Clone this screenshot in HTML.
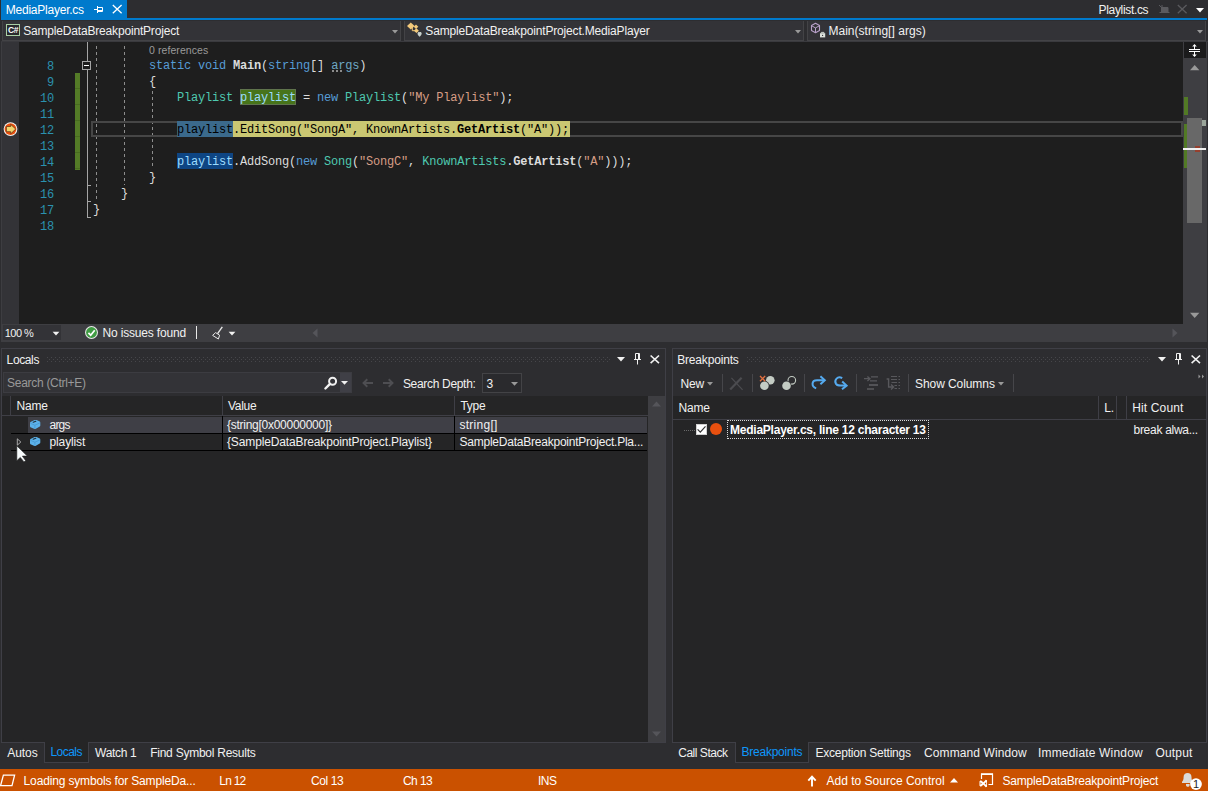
<!DOCTYPE html>
<html>
<head>
<meta charset="utf-8">
<title>MediaPlayer.cs</title>
<style>
*{box-sizing:border-box;margin:0;padding:0}
html,body{width:1208px;height:791px;overflow:hidden;background:#2d2d30}
body{position:relative;font-family:"Liberation Sans",sans-serif;font-size:12px;color:#f1f1f1;line-height:1}
.a{position:absolute}
.t{position:absolute;white-space:pre;line-height:16px;height:16px;font-family:"Liberation Sans",sans-serif;font-size:12px;color:#f1f1f1}
.code{font-family:"Liberation Mono",monospace;font-size:12px;letter-spacing:-0.2px;color:#dcdcdc}
.kw{color:#569cd6}.ty{color:#4ec9b0}.st{color:#d69d85}.lv{color:#9cdcfe}.b{font-weight:bold}
.ln{position:absolute;left:20px;width:34px;text-align:right;font-family:"Liberation Mono",monospace;font-size:12px;letter-spacing:-0.2px;color:#2b91af;line-height:16px;height:16px}
.guide{width:1px;background:repeating-linear-gradient(to bottom,#8e8e8e 0,#8e8e8e 3px,transparent 3px,transparent 6px)}
.grip{height:5px;background-image:radial-gradient(circle at 0.5px 0.5px,#46464a 0.6px,transparent 0.7px),radial-gradient(circle at 2.5px 2.5px,#46464a 0.6px,transparent 0.7px);background-size:4px 4px}
.sep{width:1px;background:#46464a}
svg{position:absolute;overflow:visible}
</style>
</head>
<body>

<!-- ===== document tab strip ===== -->
<div class="a" style="left:0;top:0;width:1208px;height:18px;background:#2d2d30"></div>
<div class="a" style="left:1px;top:0;width:126px;height:18px;background:#007acc"></div>
<div class="t" style="left:5.80px;top:2px;letter-spacing:-0.236px;color:#fff">MediaPlayer.cs</div>
<div class="t" style="left:1098.60px;top:2px;letter-spacing:-0.334px;">Playlist.cs</div>
<svg style="left:93px;top:5px" width="10" height="9" viewBox="0 0 10 9"><path d="M1 4.500h3.500M4.500 1v7M4.500 2.500h5v3.500M4.500 5.500h5v1h-5" stroke="#fff" stroke-width="1" fill="none"/></svg>
<svg style="left:112px;top:4px" width="11" height="10" viewBox="0 0 11 10"><path d="M0.800 1l8.800 8.200M9.600 1L0.800 9.200" stroke="#fff" stroke-width="1.300" fill="none"/></svg>
<svg style="left:1158px;top:4px" width="12" height="10" viewBox="0 0 12 10"><path d="M3.500 3.500h6.500v4.500h-6.500zM1.500 8.500h10" fill="#5a5a5e" stroke="#5a5a5e" stroke-width="1"/><path d="M1 1l3 3M4 1v2" stroke="#5a5a5e" stroke-width="1" fill="none"/></svg>
<svg style="left:1177px;top:4px" width="11" height="10" viewBox="0 0 11 10"><path d="M0.800 1l8.800 8.200M9.600 1L0.800 9.200" stroke="#5a5a5e" stroke-width="1.300" fill="none"/></svg>
<svg style="left:1196px;top:8px" width="8" height="5" viewBox="0 0 8 5"><path d="M0 0h8L4 4.400z" fill="#fff"/></svg>
<div class="a" style="left:1px;top:18px;width:1206px;height:2px;background:#007acc"></div>

<!-- ===== navigation bar ===== -->
<div class="a" style="left:0;top:20px;width:1208px;height:22px;background:#2d2d30"></div>
<div class="a" style="left:0;top:41px;width:1208px;height:1px;background:#3a3a3e"></div>
<div class="a" style="left:2px;top:21px;width:399px;height:20px;background:#333337;border:1px solid #434346;border-top:none"></div>
<div class="a" style="left:404px;top:21px;width:400px;height:20px;background:#333337;border:1px solid #434346;border-top:none"></div>
<div class="a" style="left:807px;top:21px;width:399px;height:20px;background:#333337;border:1px solid #434346;border-top:none"></div>
<svg style="left:392px;top:30px" width="6" height="4" viewBox="0 0 6 4"><path d="M0 0h6L3 3.4z" fill="#999"/></svg>
<svg style="left:795px;top:30px" width="6" height="4" viewBox="0 0 6 4"><path d="M0 0h6L3 3.4z" fill="#999"/></svg>
<svg style="left:1197px;top:30px" width="6" height="4" viewBox="0 0 6 4"><path d="M0 0h6L3 3.4z" fill="#999"/></svg>
<!-- C# project icon -->
<div class="a" style="left:6px;top:24px;width:14px;height:12px;border:1px solid #a9cfa4;background:#2a2a2d"></div>
<div class="t" style="left:7px;top:25px;width:12px;height:10px;line-height:10px;font-size:8.5px;font-weight:bold;letter-spacing:-0.5px;color:#fff;text-align:center">C#</div>
<!-- class icon -->
<svg style="left:406px;top:22px" width="18" height="17" viewBox="0 0 18 17">
<path d="M4.8 0.4L8.6 4 4.8 7.6 1 4z" fill="#f3c97a"/>
<path d="M10 2.5l2.3 2.3L10 7.100 7.700 4.800z" fill="#f3c97a"/>
<path d="M10.400 6.300l2.500 2.400-2.500 2.400-2.500-2.400z" fill="#f3c97a"/>
<path d="M6.300 5v3.700h2.500" stroke="#f3c97a" stroke-width="1" fill="none"/>
<path d="M13.600 10.200c0.800-0.700 2.100 0 2.100 1.200 0 1.500-2.100 3.300-2.100 3.300s-2.100-1.800-2.100-3.300c0-1.200 1.300-1.900 2.100-1.200z" fill="#c8d0cc"/>
</svg>
<!-- method icon -->
<svg style="left:810px;top:22px" width="17" height="17" viewBox="0 0 17 17">
<path d="M5.500 1.300l4 2.300v4.800l-4 2.300-4-2.300V3.600z" stroke="#b8a0c8" stroke-width="1.100" fill="none" stroke-linejoin="round"/>
<path d="M1.700 3.800l3.800 2.100 3.800-2.100M5.500 5.900v4.600" stroke="#b8a0c8" stroke-width="1" fill="none"/>
<rect x="10" y="11.200" width="5.200" height="4.200" fill="#dde3dd"/>
<path d="M11.300 11.200v-0.800h2.600v0.800" stroke="#dde3dd" stroke-width="0.900" fill="none"/>
<circle cx="12.600" cy="13.400" r="0.600" fill="#333337"/>
</svg>
<div class="t" style="left:23.20px;top:23px;letter-spacing:-0.178px;">SampleDataBreakpointProject</div>
<div class="t" style="left:425.30px;top:23px;letter-spacing:-0.165px;">SampleDataBreakpointProject.MediaPlayer</div>
<div class="t" style="left:828.40px;top:23px;letter-spacing:0.034px;">Main(string[] args)</div>

<!-- ===== editor ===== -->
<div class="a" style="left:0;top:42px;width:1186px;height:282px;background:#1e1e1e"></div>
<div class="a" style="left:0;top:42px;width:19px;height:282px;background:#333337"></div>
<div class="a" style="left:1px;top:42px;width:1px;height:282px;background:#3d3d41"></div>
<!-- change tracking bar -->
<div class="a" style="left:74.5px;top:73px;width:5px;height:96.5px;background:repeating-linear-gradient(to bottom,#547b27 0,#547b27 15px,#486b20 15px,#486b20 16px)"></div>
<!-- outlining -->
<div class="a" style="left:87px;top:42px;width:1px;height:176px;background:#a5a5a5"></div>
<div class="a" style="left:87px;top:185px;width:4px;height:1px;background:#a5a5a5"></div>
<div class="a" style="left:87px;top:201px;width:4px;height:1px;background:#a5a5a5"></div>
<div class="a" style="left:87px;top:217px;width:4px;height:1px;background:#a5a5a5"></div>
<div class="a" style="left:82px;top:61px;width:9px;height:9px;background:#1e1e1e;border:1px solid #a5a5a5"></div>
<div class="a" style="left:84px;top:65px;width:5px;height:1px;background:#fff"></div>
<!-- indent guides -->
<div class="a guide" style="left:96px;top:46px;height:154px"></div>
<div class="a guide" style="left:124px;top:46px;height:139px"></div>
<div class="a guide" style="left:152px;top:91px;height:78px"></div>
<!-- current line box -->
<div class="a" style="left:91px;top:121px;width:1092px;height:16px;border:2px solid #464646"></div>
<!-- highlights -->
<div class="a" style="left:240px;top:89px;width:56px;height:16px;background:#47741a;border:1px solid #5f734c"></div>
<div class="a" style="left:177px;top:121px;width:393px;height:16px;background:#cac772"></div>
<div class="a" style="left:177px;top:121px;width:56px;height:16px;background:#3b6a8c"></div>
<div class="a" style="left:177px;top:153px;width:56px;height:16px;background:#0e4583"></div>
<!-- line numbers -->
<div class="ln" style="top:59px">8</div>
<div class="ln" style="top:75px">9</div>
<div class="ln" style="top:91px">10</div>
<div class="ln" style="top:107px">11</div>
<div class="ln" style="top:123px">12</div>
<div class="ln" style="top:139px">13</div>
<div class="ln" style="top:155px">14</div>
<div class="ln" style="top:171px">15</div>
<div class="ln" style="top:187px">16</div>
<div class="ln" style="top:203px">17</div>
<div class="ln" style="top:219px">18</div>
<!-- fade dots -->
<div class="a" style="left:332px;top:70px;width:10px;height:2px;background:repeating-linear-gradient(to right,#8c8c8c 0,#8c8c8c 2px,transparent 2px,transparent 4px)"></div>
<!-- code -->
<div class="t" style="left:149.00px;top:42px;letter-spacing:0.080px;font-size:10.5px;color:#9a9a9a">0 references</div>
<div class="t code" style="left:149px;top:58px"><span class="kw">static</span> <span class="kw">void</span> <span class="b">Main</span>(<span class="kw">string</span>[] <span style="color:#6fa8c4">args</span>)</div>
<div class="t code" style="left:149px;top:74px">{</div>
<div class="t code" style="left:177px;top:90px"><span class="ty">Playlist</span> <span class="lv">playlist</span> = <span class="kw">new</span> <span class="ty">Playlist</span>(<span class="st">"My Playlist"</span>);</div>
<div class="t code" style="left:177px;top:122px;color:#000">playlist.EditSong("SongA", KnownArtists.<span class="b">GetArtist</span>("A"));</div>
<div class="t code" style="left:177px;top:154px"><span class="lv">playlist</span>.AddSong(<span class="kw">new</span> <span class="ty">Song</span>(<span class="st">"SongC"</span>, <span class="ty">KnownArtists</span>.<span class="b">GetArtist</span>(<span class="st">"A"</span>)));</div>
<div class="t code" style="left:149px;top:170px">}</div>
<div class="t code" style="left:121px;top:186px">}</div>
<div class="t code" style="left:93px;top:202px">}</div>

<!-- breakpoint / current statement glyph -->
<svg style="left:3px;top:121px" width="16" height="16" viewBox="0 0 16 16">
<circle cx="7.500" cy="8.100" r="6.900" fill="#f4f4f0"/>
<circle cx="7.500" cy="8.100" r="5.900" fill="#ea4f0c"/>
<path d="M3.400 5.500h4.300V3.400l5 4.700-5 4.700v-2.100H3.400z" fill="#f0d56e" stroke="#5a2c14" stroke-width="0.700" stroke-linejoin="round"/>
</svg>
<!-- vertical scrollbar -->
<div class="a" style="left:1183px;top:42px;width:24px;height:282px;background:#3e3e42"></div>
<div class="a" style="left:1184px;top:42px;width:22px;height:16px;background:#1b1b1c"></div>
<svg style="left:1184px;top:42px" width="22" height="16" viewBox="0 0 22 16">
<path d="M5 7.5h11M5 9.5h11" stroke="#fff" stroke-width="1" fill="none"/>
<path d="M10.5 3v4M10.5 10v4" stroke="#fff" stroke-width="1" fill="none"/>
<path d="M8.2 4.6l2.3-2.6 2.3 2.6zM8.2 12.4l2.3 2.6 2.3-2.6z" fill="#fff"/>
</svg>
<svg style="left:1183px;top:58px" width="23" height="266" viewBox="0 0 23 266">
<path d="M7 12.3l4.7-5.3 4.7 5.3z" fill="#999"/>
<path d="M7 254.7l4.7 5.3 4.7-5.3z" fill="#999"/>
</svg>
<div class="a" style="left:1184px;top:97px;width:4px;height:18px;background:#527a25"></div>
<div class="a" style="left:1184px;top:124px;width:4px;height:44px;background:#527a25"></div>
<div class="a" style="left:1187px;top:118px;width:15px;height:105px;background:#686868"></div>
<div class="a" style="left:1202px;top:120px;width:4px;height:6px;background:#9aa59a"></div>
<div class="a" style="left:1195px;top:146px;width:5px;height:6px;background:#96402e"></div>
<div class="a" style="left:1183px;top:148px;width:23px;height:2px;background:#f0f0f0"></div>


<!-- ===== editor bottom bar ===== -->
<div class="a" style="left:0;top:324px;width:1207px;height:18px;background:#3e3e42"></div>
<div class="a" style="left:3px;top:325px;width:58px;height:15px;background:#333337"></div>
<div class="t" style="left:4.70px;top:325px;letter-spacing:-0.502px;font-size:11px">100 %</div>
<svg style="left:52px;top:331px" width="8" height="5" viewBox="0 0 8 5"><path d="M0.600 0.800h6.800L4 4.400z" fill="#f1f1f1"/></svg>
<svg style="left:84px;top:325px" width="16" height="16" viewBox="0 0 16 16">
<circle cx="7.5" cy="7.5" r="6.5" fill="#e8e8e8"/>
<circle cx="7.5" cy="7.5" r="5.4" fill="#3f9b42"/>
<path d="M4.4 7.8l2.3 2.4 4-5" stroke="#fff" stroke-width="1.7" fill="none"/>
</svg>
<div class="t" style="left:102.50px;top:325px;letter-spacing:-0.170px;">No issues found</div>
<div class="a" style="left:196px;top:326px;width:1px;height:13px;background:#e8e8e8"></div>
<svg style="left:211px;top:326px" width="14" height="14" viewBox="0 0 14 14">
<path d="M11.3 0.8L6.6 7.6" stroke="#e8e8e8" stroke-width="1.4" fill="none"/>
<path d="M4.6 6.6l4 2.6-1.2 3.8-5.8-3.6z" fill="none" stroke="#e8e8e8" stroke-width="1"/>
</svg>
<svg style="left:228px;top:331px" width="8" height="5" viewBox="0 0 8 5"><path d="M0.600 0.800h6.800L4 4.400z" fill="#f1f1f1"/></svg>
<svg style="left:312px;top:328px" width="6" height="10" viewBox="0 0 6 10"><path d="M5.5 0.5v9L0.5 5z" fill="#55555a"/></svg>
<svg style="left:1172px;top:328px" width="6" height="10" viewBox="0 0 6 10"><path d="M0.5 0.5v9L5.5 5z" fill="#55555a"/></svg>


<div class="a" style="left:0;top:20px;width:1px;height:322px;background:#2d2d30"></div>
<!-- ===== Locals tool window ===== -->
<div class="a" style="left:1px;top:348px;width:665px;height:395px;border:1px solid #3f3f46;background:#2d2d30"></div>
<div class="t" style="left:6.60px;top:352px;letter-spacing:-0.378px;">Locals</div>
<div class="a grip" style="left:47px;top:357px;width:563px"></div>
<svg style="left:617px;top:357px" width="8" height="5" viewBox="0 0 8 5"><path d="M0 0h8L4 4.6z" fill="#f1f1f1"/></svg>
<svg style="left:633px;top:353px" width="9" height="12" viewBox="0 0 9 12"><path d="M2.500 0.500h4v6h-4zM5.500 0.500v6M1 6.500h7M4.500 6.500v5" stroke="#f1f1f1" stroke-width="1" fill="none"/></svg>
<svg style="left:649.5px;top:355px" width="10" height="9" viewBox="0 0 10 9"><path d="M0.600 0.500L9 8.200M9 0.500L0.600 8.200" stroke="#f1f1f1" stroke-width="1.600" fill="none"/></svg>
<!-- search row -->
<div class="a" style="left:3px;top:372px;width:349px;height:21px;background:#333337;border:1px solid #3c3c41"></div>
<div class="a" style="left:340px;top:373px;width:11px;height:19px;background:#3f3f46"></div>
<div class="t" style="left:7.10px;top:375px;letter-spacing:-0.295px;color:#999">Search (Ctrl+E)</div>
<svg style="left:324px;top:376px" width="14" height="14" viewBox="0 0 14 14"><circle cx="8.600" cy="5.200" r="3.500" stroke="#f1f1f1" stroke-width="2" fill="none"/><path d="M6 7.900L1.400 12.500" stroke="#f1f1f1" stroke-width="2.400" stroke-linecap="round" fill="none"/></svg>
<svg style="left:341px;top:381px" width="7" height="4" viewBox="0 0 7 4"><path d="M0 0h7L3.5 3.8z" fill="#f1f1f1"/></svg>
<svg style="left:362px;top:378px" width="12" height="10" viewBox="0 0 12 10"><path d="M11 5H2M5.300 1.300L1.500 5l3.800 3.700" stroke="#4e4e52" stroke-width="1.900" fill="none"/></svg>
<svg style="left:382px;top:378px" width="12" height="10" viewBox="0 0 12 10"><path d="M1 5h9M6.700 1.300L10.500 5 6.700 8.700" stroke="#4e4e52" stroke-width="1.900" fill="none"/></svg>
<div class="t" style="left:402.90px;top:376px;letter-spacing:-0.315px;">Search Depth:</div>
<div class="a" style="left:482px;top:373px;width:40px;height:20px;background:#2a2a2d;border:1px solid #434346"></div>
<div class="t" style="left:486.50px;top:376px;letter-spacing:-1.100px;">3</div>
<svg style="left:511px;top:382px" width="7" height="4" viewBox="0 0 7 4"><path d="M0 0h7L3.5 3.8z" fill="#999"/></svg>
<!-- table -->
<div class="a" style="left:2px;top:396px;width:646px;height:346px;background:#252526"></div>
<div class="a" style="left:648px;top:396px;width:17px;height:346px;background:#3e3e42"></div>
<svg style="left:648px;top:396px" width="17" height="346" viewBox="0 0 17 346"><path d="M4 10.6L8.5 5.6l4.5 5z" fill="#55555a"/><path d="M4 335.4l4.5 5 4.5-5z" fill="#55555a"/></svg>
<!-- header separators -->
<div class="a" style="left:10px;top:396px;width:1px;height:19px;background:#3f3f46"></div>
<div class="a" style="left:222px;top:396px;width:1px;height:19px;background:#3f3f46"></div>
<div class="a" style="left:454px;top:396px;width:1px;height:19px;background:#3f3f46"></div>
<div class="a" style="left:2px;top:415px;width:646px;height:1px;background:#3f3f46"></div>
<div class="t" style="left:16.50px;top:398px;letter-spacing:-0.212px;">Name</div>
<div class="t" style="left:228.00px;top:398px;letter-spacing:-0.282px;">Value</div>
<div class="t" style="left:460.40px;top:398px;letter-spacing:-0.247px;">Type</div>
<!-- rows -->
<div class="a" style="left:28px;top:417px;width:619px;height:16px;background:#3f3f46"></div>
<div class="a" style="left:11px;top:433px;width:636px;height:1px;background:#000"></div>
<div class="a" style="left:11px;top:450px;width:636px;height:1px;background:#000"></div>
<div class="a" style="left:222px;top:416px;width:1px;height:35px;background:#000"></div>
<div class="a" style="left:454px;top:416px;width:1px;height:35px;background:#000"></div>
<svg style="left:29px;top:419px" width="12" height="11" viewBox="0 0 12 11"><path d="M1 4.200C1 3.400 1.300 3 2 2.700L5.600 1.100c0.700-0.300 1.200-0.300 1.900 0l2.800 1.100c0.700 0.300 1 0.700 1 1.400v2.600c0 0.800-0.300 1.200-1 1.500L6.900 9.700c-0.700 0.300-1.200 0.300-1.900 0L2 8.400C1.300 8.100 1 7.700 1 6.900z" fill="#5cb2ea"/><path d="M4.200 3.300l2.600-1.100" stroke="#20303c" stroke-width="1.100" stroke-linecap="round" fill="none"/><path d="M1.400 4.300l4.500 1.900 5-2.300M5.900 6.200v3.400" stroke="#3f8fc8" stroke-width="0.600" fill="none"/></svg>
<svg style="left:29px;top:436px" width="12" height="11" viewBox="0 0 12 11"><path d="M1 4.200C1 3.400 1.300 3 2 2.700L5.600 1.100c0.700-0.300 1.200-0.300 1.900 0l2.800 1.100c0.700 0.300 1 0.700 1 1.400v2.600c0 0.800-0.300 1.200-1 1.500L6.900 9.700c-0.700 0.300-1.200 0.300-1.900 0L2 8.400C1.300 8.100 1 7.700 1 6.900z" fill="#5cb2ea"/><path d="M4.200 3.300l2.600-1.100" stroke="#20303c" stroke-width="1.100" stroke-linecap="round" fill="none"/><path d="M1.400 4.300l4.500 1.900 5-2.300M5.900 6.200v3.400" stroke="#3f8fc8" stroke-width="0.600" fill="none"/></svg>
<svg style="left:16px;top:438px" width="6" height="8" viewBox="0 0 6 8"><path d="M1.300 0.800v6.400L4.800 4z" stroke="#b8b8b8" stroke-width="0.900" fill="none"/></svg>
<div class="t" style="left:49.50px;top:417px;letter-spacing:-0.781px;">args</div>
<div class="t" style="left:49.50px;top:434px;letter-spacing:-0.121px;">playlist</div>
<div class="t" style="left:227.00px;top:417px;letter-spacing:-0.268px;">{string[0x00000000]}</div>
<div class="t" style="left:227.00px;top:434px;letter-spacing:-0.138px;">{SampleDataBreakpointProject.Playlist}</div>
<div class="t" style="left:459.50px;top:417px;letter-spacing:0.260px;">string[]</div>
<div class="t" style="left:459.50px;top:434px;letter-spacing:-0.230px;">SampleDataBreakpointProject.Pla...</div>
<!-- mouse cursor -->
<svg style="left:16px;top:444px" width="13" height="20" viewBox="0 0 13 20"><path d="M0.800 1.800V16.700L4.300 13.400 8 17.900 9.700 16.700 6.400 12.100H11.300z" fill="#f6fafb" stroke="#1a1a1a" stroke-width="0.600" stroke-linejoin="round"/></svg>
<!-- bottom tabs -->
<div class="a" style="left:44px;top:742px;width:45px;height:21px;background:#252526;border:1px solid #3f3f46;border-top:none"></div>
<div class="t" style="left:7.20px;top:745px;letter-spacing:-0.046px;">Autos</div>
<div class="t" style="left:50.40px;top:744px;letter-spacing:-0.537px;color:#0e97fb">Locals</div>
<div class="t" style="left:95.10px;top:745px;letter-spacing:-0.333px;">Watch 1</div>
<div class="t" style="left:150.20px;top:745px;letter-spacing:-0.247px;">Find Symbol Results</div>


<!-- ===== Breakpoints tool window ===== -->
<div class="a" style="left:672px;top:348px;width:535px;height:395px;border:1px solid #3f3f46;background:#2d2d30"></div>
<div class="t" style="left:677.20px;top:352px;letter-spacing:-0.177px;">Breakpoints</div>
<div class="a grip" style="left:747px;top:357px;width:403px"></div>
<svg style="left:1158px;top:357px" width="8" height="5" viewBox="0 0 8 5"><path d="M0 0h8L4 4.6z" fill="#f1f1f1"/></svg>
<svg style="left:1174px;top:353px" width="9" height="12" viewBox="0 0 9 12"><path d="M2.500 0.500h4v6h-4zM5.500 0.500v6M1 6.500h7M4.500 6.500v5" stroke="#f1f1f1" stroke-width="1" fill="none"/></svg>
<svg style="left:1190.5px;top:355px" width="10" height="9" viewBox="0 0 10 9"><path d="M0.600 0.500L9 8.200M9 0.500L0.600 8.200" stroke="#f1f1f1" stroke-width="1.600" fill="none"/></svg>
<!-- toolbar -->
<div class="t" style="left:680.50px;top:376px;letter-spacing:-0.170px;">New</div>
<svg style="left:707px;top:382px" width="6" height="4" viewBox="0 0 6 4"><path d="M0 0h6L3 3.4z" fill="#999"/></svg>
<div class="a sep" style="left:722px;top:374px;height:18px"></div>
<svg style="left:729px;top:377px" width="15" height="14" viewBox="0 0 15 14"><path d="M1.200 12.600L12.600 0.800" stroke="#4c4c50" stroke-width="2.200" fill="none"/><path d="M2.400 0.800L13.600 12.800" stroke="#4c4c50" stroke-width="1.200" fill="none"/></svg>
<div class="a sep" style="left:752px;top:374px;height:18px"></div>
<svg style="left:759px;top:375px" width="17" height="16" viewBox="0 0 17 16"><circle cx="11.300" cy="5.300" r="4.300" fill="#c4ccc4"/><circle cx="5.400" cy="10.700" r="4.900" fill="#2d2d30"/><circle cx="5.400" cy="10.700" r="4.300" fill="#c4ccc4"/><path d="M1 1l5.200 5.200M6.200 1L1 6.200" stroke="#e2703f" stroke-width="1.300" fill="none"/></svg>
<svg style="left:781px;top:375px" width="17" height="16" viewBox="0 0 17 16"><circle cx="10.800" cy="5.300" r="3.800" fill="none" stroke="#c4ccc4" stroke-width="1.100"/><circle cx="5.500" cy="10.700" r="4.900" fill="#2d2d30"/><circle cx="5.500" cy="10.700" r="4.300" fill="#c4ccc4"/></svg>
<div class="a sep" style="left:804px;top:374px;height:18px"></div>
<svg style="left:811px;top:376px" width="16" height="14" viewBox="0 0 16 14"><path d="M5.200 12.400C0.200 10.600 0.200 4.200 6 4.200H13.400" stroke="#55aaef" stroke-width="2" fill="none"/><path d="M9.400 0.200L13.800 4.200 9.400 8.200" stroke="#55aaef" stroke-width="2" fill="none"/></svg>
<svg style="left:834px;top:376px" width="14" height="14" viewBox="0 0 14 14"><path d="M8.200 2.200C3.600 -0.400 -0.200 4 2 7.800 3.600 10 6.200 9.700 11.400 9.500" stroke="#55aaef" stroke-width="2" fill="none"/><path d="M8.200 5.600L12.600 9.600 8 13.300" stroke="#55aaef" stroke-width="2" fill="none"/></svg>
<div class="a sep" style="left:856px;top:374px;height:18px"></div>
<svg style="left:863px;top:375px" width="16" height="16" viewBox="0 0 16 16"><path d="M1 3.700h6M4.400 1.400L7 3.700 4.400 6" stroke="#58585c" stroke-width="1.300" fill="none"/><path d="M8 1.800h7M7 5.800h7" stroke="#58585c" stroke-width="1.300" fill="none"/><path d="M6 10h9" stroke="#58585c" stroke-width="1.800" fill="none"/><path d="M4 14h7" stroke="#58585c" stroke-width="1.600" fill="none"/></svg>
<svg style="left:886px;top:375px" width="16" height="16" viewBox="0 0 16 16"><path d="M0.600 4h2v8h4.600M5 9.600L7.600 12 5 14.400" stroke="#58585c" stroke-width="1.400" fill="none"/><path d="M5 1.500h6M5 4.500h6M5.500 7.500h5.500M8.500 10.500h2.500M8.500 13.500h2.500M12.500 1.500h1.500M12.500 4.500h1.500M12.500 7.500h1.500M12.500 10.500h1.500M12.500 13.500h1.500" stroke="#58585c" stroke-width="1.100" fill="none"/></svg>
<div class="a sep" style="left:908px;top:374px;height:18px"></div>
<div class="t" style="left:915.00px;top:376px;letter-spacing:-0.073px;">Show Columns</div>
<svg style="left:998px;top:382px" width="6" height="4" viewBox="0 0 6 4"><path d="M0 0h6L3 3.4z" fill="#999"/></svg>
<div class="a sep" style="left:1013px;top:374px;height:18px"></div>
<svg style="left:1198px;top:374px" width="7" height="5" viewBox="0 0 7 5"><path d="M0.5 0.5L2.5 2.5 0.5 4.5zM4 0.5L6 2.5 4 4.5z" fill="#999"/></svg>
<!-- list -->
<div class="a" style="left:673px;top:396px;width:533px;height:346px;background:#252526"></div>
<div class="a" style="left:673px;top:419px;width:533px;height:1px;background:#3f3f46"></div>
<div class="a" style="left:1098px;top:396px;width:1px;height:23px;background:#3f3f46"></div>
<div class="a" style="left:1116px;top:396px;width:1px;height:23px;background:#3f3f46"></div>
<div class="a" style="left:1126px;top:396px;width:1px;height:23px;background:#3f3f46"></div>
<div class="t" style="left:678.50px;top:400px;letter-spacing:-0.179px;">Name</div>
<div class="t" style="left:1104.20px;top:400px;">L.</div>
<div class="t" style="left:1132.20px;top:400px;letter-spacing:0.152px;">Hit Count</div>
<div class="a" style="left:684px;top:430px;width:12px;height:1px;background:repeating-linear-gradient(to right,#6a6a6a 0,#6a6a6a 1px,transparent 1px,transparent 2px)"></div>
<div class="a" style="left:696px;top:424px;width:11px;height:11px;background:#fff;border:1px solid #d0d0d0"></div>
<svg style="left:696px;top:424px" width="11" height="11" viewBox="0 0 11 11"><path d="M1.600 5.400l2.700 2.800 5.200-5.800" stroke="#333" stroke-width="1.200" fill="none"/></svg>
<div class="a" style="left:710px;top:423px;width:12px;height:12px;border-radius:6px;background:#e8500f"></div>
<div class="a" style="left:727px;top:420px;width:202px;height:19px;border:1px dotted #d8d8d8"></div>
<div class="t" style="left:730.00px;top:422px;letter-spacing:-0.233px;font-weight:bold;color:#fff">MediaPlayer.cs, line 12 character 13</div>
<div class="t" style="left:1133.50px;top:422px;letter-spacing:-0.283px;">break alwa...</div>
<!-- bottom tabs -->
<div class="a" style="left:735px;top:742px;width:74px;height:21px;background:#252526;border:1px solid #3f3f46;border-top:none"></div>
<div class="t" style="left:678.20px;top:745px;letter-spacing:-0.469px;">Call Stack</div>
<div class="t" style="left:741.50px;top:744px;letter-spacing:-0.237px;color:#0e97fb">Breakpoints</div>
<div class="t" style="left:815.50px;top:745px;letter-spacing:-0.229px;">Exception Settings</div>
<div class="t" style="left:924.00px;top:745px;letter-spacing:0.100px;">Command Window</div>
<div class="t" style="left:1038.00px;top:745px;letter-spacing:0.175px;">Immediate Window</div>
<div class="t" style="left:1155.50px;top:745px;letter-spacing:0.162px;">Output</div>


<!-- ===== status bar ===== -->
<div class="a" style="left:0;top:769px;width:1208px;height:22px;background:#ca5100"></div>
<svg style="left:0;top:774px" width="16" height="13" viewBox="0 0 16 13"><path d="M3.4 1.2h11.2l-2.6 10.4H0.6z" stroke="#fff" stroke-width="1.3" fill="none"/></svg>
<div class="t" style="left:23.60px;top:773px;letter-spacing:-0.154px;color:#fff">Loading symbols for SampleDa...</div>
<div class="t" style="left:219.30px;top:773px;letter-spacing:-0.764px;color:#fff">Ln 12</div>
<div class="t" style="left:311.00px;top:773px;letter-spacing:-0.403px;color:#fff">Col 13</div>
<div class="t" style="left:403.00px;top:773px;letter-spacing:-0.587px;color:#fff">Ch 13</div>
<div class="t" style="left:538.00px;top:773px;letter-spacing:-0.500px;color:#fff">INS</div>
<svg style="left:807px;top:775px" width="10" height="12" viewBox="0 0 10 12"><path d="M5 11.500V2M1.300 5.700L5 1.700l3.700 4" stroke="#fff" stroke-width="1.900" fill="none"/></svg>
<div class="t" style="left:826.50px;top:773px;color:#fff">Add to Source Control</div>
<svg style="left:950px;top:778px" width="8" height="5" viewBox="0 0 8 5"><path d="M0 4.6h8L4 0z" fill="#fff"/></svg>
<svg style="left:979px;top:773px" width="15" height="15" viewBox="0 0 15 15"><path d="M2.500 6V1h11v10.500H9.500" stroke="#fff" stroke-width="1.200" fill="none"/><path d="M2 1.200h12" stroke="#fff" stroke-width="1.600" fill="none"/><path d="M0.500 8.300l1.400-1.100 2.500 2 2.300-2.500 1.300 0.600v6.400l-1.300 0.600-2.300-2.500-2.500 2-1.400-1.100z" fill="#fff"/><path d="M5.600 10.500l1.600-1.500v3z" fill="#ca5100"/><path d="M1.500 9.300v2.400l1.300-1.200z" fill="#ca5100"/></svg>
<div class="t" style="left:1002.50px;top:773px;letter-spacing:-0.189px;color:#fff">SampleDataBreakpointProject</div>
<svg style="left:1181px;top:772px" width="22" height="19" viewBox="0 0 22 19"><path d="M6.600 1c2.300 0 3.900 1.500 3.900 4 0 2.600 0.600 3.700 1.600 4.700v1.300H1V9.700c1-1 1.600-2.100 1.600-4.700 0-2.500 1.700-4 4-4z" fill="#dadada"/><path d="M5 12h3.600v1.300c0 0.900-0.700 1.500-1.800 1.500S5 14.200 5 13.300z" fill="#dadada"/><circle cx="15" cy="12.100" r="5.900" fill="#fff"/></svg>
<div class="t" style="left:1190px;top:779px;width:12px;text-align:center;font-size:11px;color:#1e1e1e;line-height:10px;height:10px">1</div>

</body>
</html>
